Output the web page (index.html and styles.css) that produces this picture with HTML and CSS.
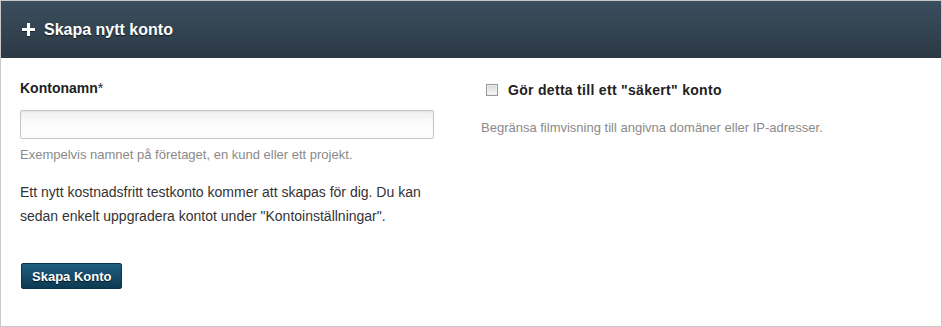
FILE: index.html
```html
<!DOCTYPE html>
<html lang="sv">
<head>
  <meta charset="UTF-8" />
  <meta name="viewport" content="width=device-width, initial-scale=1" />
  <title>Skapa nytt konto</title>
  <link rel="stylesheet" href="styles.css">
</head>
<body>
  <section class="panel">
    <header class="panel-header">
      <svg class="plus-icon" width="13" height="13" viewBox="0 0 13 13" aria-hidden="true">
        <rect x="5" y="0" width="3" height="13" fill="#fff"/>
        <rect x="0" y="5" width="13" height="3" fill="#fff"/>
      </svg>
      <h1 class="panel-title">Skapa nytt konto</h1>
    </header>

    <form class="panel-body" id="accountForm">
      <div class="col-left">
        <label class="field-label" for="accountName">Kontonamn<span class="req">*</span></label>
        <input type="text" id="accountName" class="text-input">
        <p class="hint">Exempelvis namnet på företaget, en kund eller ett projekt.</p>
        <p class="info">Ett nytt kostnadsfritt testkonto kommer att skapas för dig. Du kan sedan enkelt uppgradera kontot under "Kontoinställningar".</p>
        <button type="submit" class="btn-primary">Skapa Konto</button>
      </div>

      <div class="col-right">
        <label class="check-row">
          <input type="checkbox" class="check-box" name="secure">
          <span>Gör detta till ett "säkert" konto</span>
        </label>
        <p class="hint hint-right">Begränsa filmvisning till angivna domäner eller IP-adresser.</p>
      </div>
    </form>
  </section>
</body>
</html>
```

FILE: styles.css
```css
* {
  box-sizing: border-box;
  margin: 0;
  padding: 0;
}

body {
  font-family: "Liberation Sans", Arial, sans-serif;
  background: #fff;
  color: #333;
}

.panel {
  width: 942px;
  border: 1px solid #c8c8c8;
  background: #fff;
}

.panel-header {
  height: 57px;
  display: flex;
  align-items: center;
  padding-left: 21px;
  background: linear-gradient(#3b4e5e, #2c3945);
}

.plus-icon {
  display: block;
  margin-right: 9px;
  filter: drop-shadow(0 1px 0 rgba(0,0,0,0.5));
}

.panel-title {
  font-size: 16px;
  font-weight: bold;
  color: #fff;
  text-shadow: 0 1px 1px rgba(0,0,0,0.6);
}

.panel-body {
  display: grid;
  grid-template-columns: 440px 440px;
  column-gap: 20px;
  padding: 22px 19px 37px 19px;
}

.field-label {
  display: block;
  font-size: 14px;
  line-height: 17px;
  font-weight: bold;
  color: #222;
}

.req {
  font-weight: normal;
}

.text-input {
  display: block;
  width: 414px;
  height: 29px;
  margin-top: 13px;
  padding: 4px 8px;
  border: 1px solid #c6c6c6;
  border-radius: 2px;
  background: linear-gradient(#efefef, #fbfbfb 45%, #fdfdfd);
  box-shadow: inset 0 1px 2px rgba(0,0,0,0.06);
  font-family: inherit;
  font-size: 13px;
}

.hint {
  font-size: 13px;
  line-height: 15px;
  color: #8a8a8a;
  margin-top: 8px;
}

.info {
  font-size: 14px;
  line-height: 24px;
  color: #333;
  margin-top: 18px;
  max-width: 420px;
}

.btn-primary {
  display: block;
  margin-top: 35px;
  margin-left: 1px;
  height: 26px;
  padding: 0 10px;
  border: 1px solid #0b3349;
  border-radius: 2px;
  background: linear-gradient(#1f5f80, #0d3a52);
  color: #fff;
  font-family: inherit;
  font-size: 13px;
  font-weight: bold;
  text-shadow: 0 1px 1px rgba(0,0,0,0.7);
  cursor: pointer;
}

.btn-primary:hover {
  background: linear-gradient(#236a8e, #0f4360);
}

.col-right {
  padding-top: 2px;
  padding-left: 1px;
}

.check-row {
  display: flex;
  align-items: center;
  font-size: 14px;
  line-height: 17px;
  font-weight: bold;
  letter-spacing: 0.3px;
  color: #222;
  cursor: pointer;
}

.check-box {
  appearance: none;
  width: 12px;
  height: 12px;
  margin: 0 10px 2px 5px;
  border: 1px solid #999;
  background: linear-gradient(#d9d9d9, #f7f7f7);
  box-shadow: inset 0 0 0 1px #eee;
}

.check-box:checked {
  background: #2c5f7d;
}

.hint-right {
  margin-top: 21px;
}
```
